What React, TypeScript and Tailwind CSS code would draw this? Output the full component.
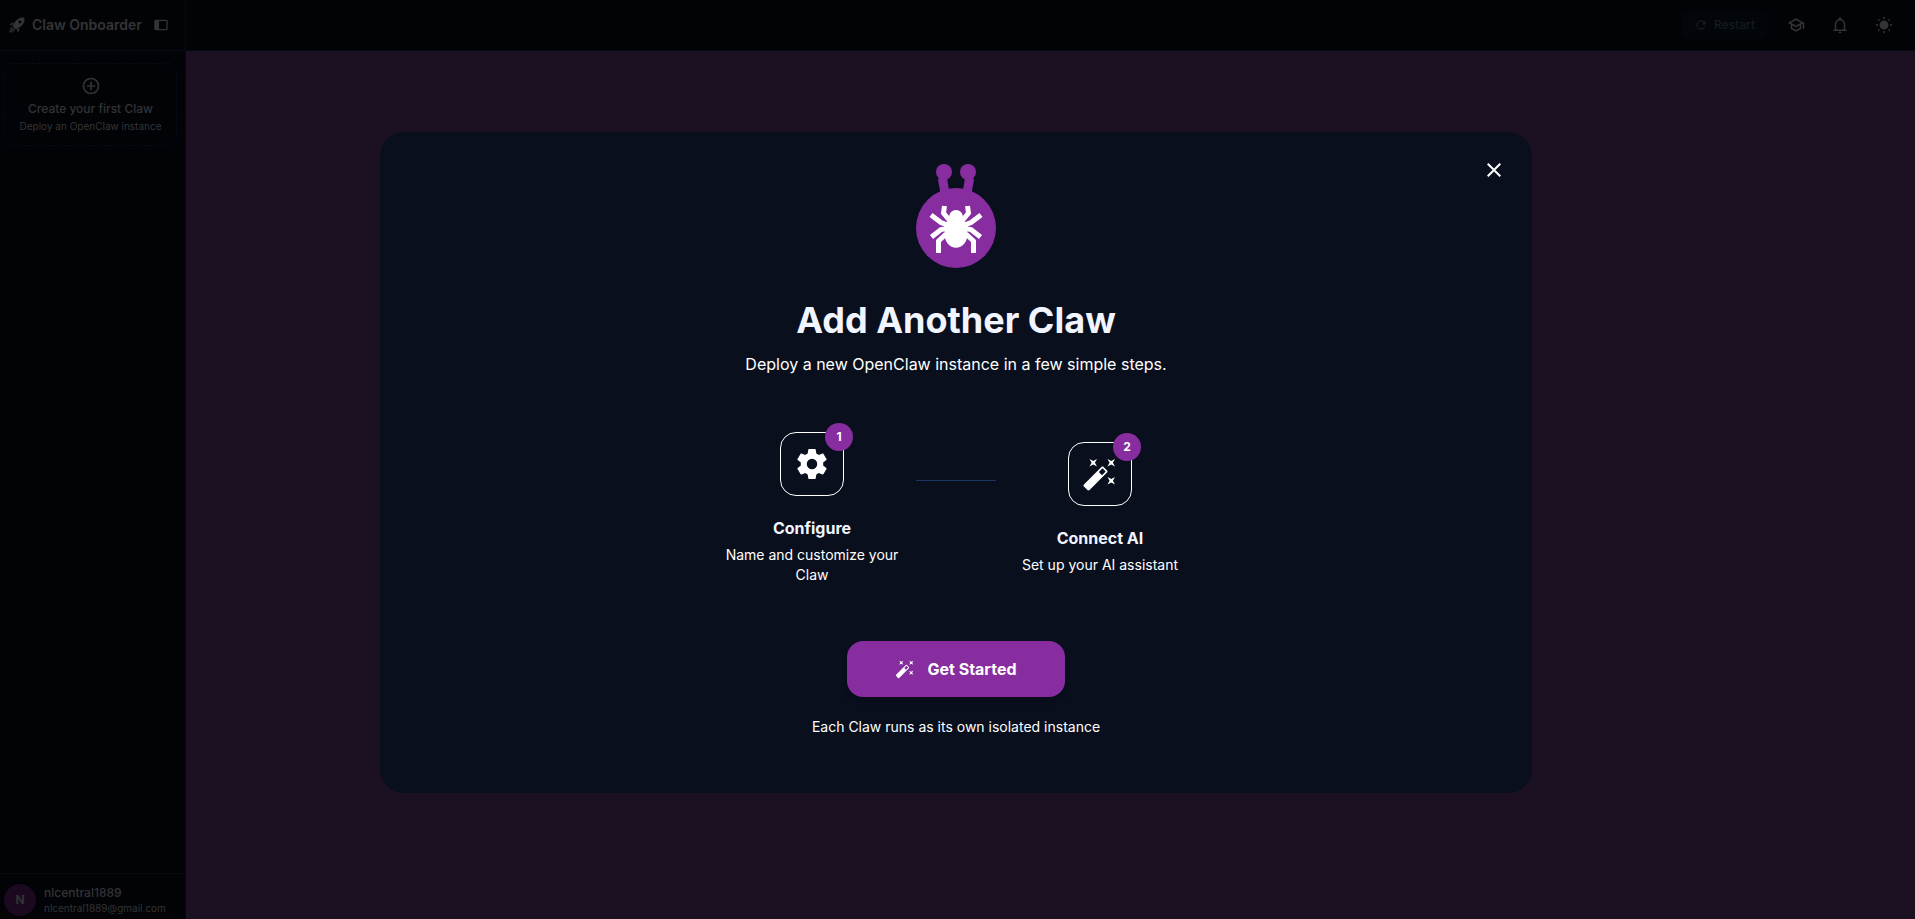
import type { ReactNode } from "react";

const icons = {
  rocket:
    "M13.13 22.19L11.5 18.36C13.07 17.78 14.54 17 15.9 16.09L13.13 22.19M5.64 12.5L1.81 10.87L7.91 8.1C7 9.46 6.22 10.93 5.64 12.5M21.61 2.39C21.61 2.39 16.66 .269 11 5.93C8.81 8.12 7.5 10.53 6.65 12.64C6.37 13.39 6.56 14.21 7.11 14.77L9.24 16.89C9.79 17.45 10.61 17.63 11.36 17.35C13.5 16.53 15.88 15.19 18.07 13C23.73 7.34 21.61 2.39 21.61 2.39M14.54 9.46C13.76 8.68 13.76 7.41 14.54 6.63S16.59 5.85 17.37 6.63C18.14 7.41 18.15 8.68 17.37 9.46C16.59 10.24 15.32 10.24 14.54 9.46M8.88 16.53L7.47 15.12L8.88 16.53M6.24 22L9.88 18.36C9.54 18.27 9.21 18.12 8.91 17.91L4.83 22H6.24M2 22H3.41L8.18 17.24L6.76 15.83L2 20.59V22M2 19.17L6.09 15.09C5.88 14.79 5.73 14.47 5.64 14.12L2 17.76V19.17Z",
  dockLeft:
    "M20 4H4A2 2 0 0 0 2 6V18A2 2 0 0 0 4 20H20A2 2 0 0 0 22 18V6A2 2 0 0 0 20 4M20 18H9V6H20Z",
  plusCircle:
    "M12,20C7.59,20 4,16.41 4,12C4,7.59 7.59,4 12,4C16.41,4 20,7.59 20,12C20,16.41 16.41,20 12,20M12,2A10,10 0 0,0 2,12A10,10 0 0,0 12,22A10,10 0 0,0 22,12A10,10 0 0,0 12,2M13,7H11V11H7V13H11V17H13V13H17V11H13V7Z",
  refresh:
    "M17.65,6.35C16.2,4.9 14.21,4 12,4A8,8 0 0,0 4,12A8,8 0 0,0 12,20C15.73,20 18.84,17.45 19.73,14H17.65C16.83,16.33 14.61,18 12,18A6,6 0 0,1 6,12A6,6 0 0,1 12,6C13.66,6 15.14,6.69 16.22,7.78L13,11H20V4L17.65,6.35Z",
  school:
    "M12 3L1 9L5 11.18V17.18L12 21L19 17.18V11.18L21 10.09V17H23V9L12 3M18.82 9L12 12.72L5.18 9L12 5.28L18.82 9M17 16L12 18.72L7 16V12.27L12 15L17 12.27V16Z",
  bell: "M10 21H14C14 22.1 13.1 23 12 23S10 22.1 10 21M21 19V20H3V19L5 17V11C5 7.9 7 5.2 10 4.3V4C10 2.9 10.9 2 12 2S14 2.9 14 4V4.3C17 5.2 19 7.9 19 11V17L21 19M17 11C17 8.2 14.8 6 12 6S7 8.2 7 11V18H17V11Z",
  sun: "M3.55 19.09L4.96 20.5L6.76 18.71L5.34 17.29M12 6C8.69 6 6 8.69 6 12S8.69 18 12 18 18 15.31 18 12C18 8.68 15.31 6 12 6M20 13H23V11H20M17.24 18.71L19.04 20.5L20.45 19.09L18.66 17.29M20.45 5L19.04 3.6L17.24 5.39L18.66 6.81M13 1H11V4H13M6.76 5.39L4.96 3.6L3.55 5L5.34 6.81L6.76 5.39M1 13H4V11H1M13 20H11V23H13",
  close:
    "M19,6.41L17.59,5L12,10.59L6.41,5L5,6.41L10.59,12L5,17.59L6.41,19L12,13.41L17.59,19L19,17.59L13.41,12L19,6.41Z",
  cog: "M12,15.5A3.5,3.5 0 0,1 8.5,12A3.5,3.5 0 0,1 12,8.5A3.5,3.5 0 0,1 15.5,12A3.5,3.5 0 0,1 12,15.5M19.43,12.97C19.47,12.65 19.5,12.33 19.5,12C19.5,11.67 19.47,11.34 19.43,11L21.54,9.37C21.73,9.22 21.78,8.95 21.66,8.73L19.66,5.27C19.54,5.05 19.27,4.96 19.05,5.05L16.56,6.05C16.04,5.66 15.5,5.32 14.87,5.07L14.5,2.42C14.46,2.18 14.25,2 14,2H10C9.75,2 9.54,2.18 9.5,2.42L9.13,5.07C8.5,5.32 7.96,5.66 7.44,6.05L4.95,5.05C4.73,4.96 4.46,5.05 4.34,5.27L2.34,8.73C2.21,8.95 2.27,9.22 2.46,9.37L4.57,11C4.53,11.34 4.5,11.67 4.5,12C4.5,12.33 4.53,12.65 4.57,12.97L2.46,14.63C2.27,14.78 2.21,15.05 2.34,15.27L4.34,18.73C4.46,18.95 4.73,19.03 4.95,18.95L7.44,17.94C7.96,18.34 8.5,18.68 9.13,18.93L9.5,21.58C9.54,21.82 9.75,22 10,22H14C14.25,22 14.46,21.82 14.5,21.58L14.87,18.93C15.5,18.67 16.04,18.34 16.56,17.94L19.05,18.95C19.27,19.03 19.54,18.95 19.66,18.73L21.66,15.27C21.78,15.05 21.73,14.78 21.54,14.63L19.43,12.97Z",
  wand: "M7.5,5.6L5,7L6.4,4.5L5,2L7.5,3.4L10,2L8.6,4.5L10,7L7.5,5.6M19.5,15.4L22,14L20.6,16.5L22,19L19.5,17.6L17,19L18.4,16.5L17,14L19.5,15.4M22,2L20.6,4.5L22,7L19.5,5.6L17,7L18.4,4.5L17,2L19.5,3.4L22,2M13.34,12.78L15.78,10.34L13.66,8.22L11.22,10.66L13.34,12.78M14.37,7.29L16.71,9.63C17.1,10 17.1,10.65 16.71,11.04L5.04,22.71C4.65,23.1 4,23.1 3.63,22.71L1.29,20.37C0.9,20 0.9,19.35 1.29,18.96L12.96,7.29C13.35,6.9 14,6.9 14.37,7.29Z",
};

const Icon = ({ name, className }: { name: keyof typeof icons; className: string }) => (
  <svg viewBox="0 0 24 24" fill="currentColor" aria-hidden="true" className={className}>
    <path d={icons[name]} />
  </svg>
);

const ClawLogo = () => (
  <svg viewBox="0 0 80 104" aria-hidden="true" className="w-20 h-[104px]">
    <g fill="#872da0">
      <circle cx="28" cy="8" r="8" />
      <circle cx="52" cy="8" r="8" />
      <path d="M22 16Q22 14 24 14L31 14L34 32L25 32Z" />
      <path d="M58 16Q58 14 56 14L49 14L46 32L55 32Z" />
      <circle cx="40" cy="64" r="40" />
    </g>
    {/* spider */}
    <g fill="#fff">
      <circle cx="40" cy="53" r="7" />
      <ellipse cx="40" cy="70" rx="11.5" ry="13.8" />
      <path d="M34 54H46L52 62L47 72H33L28 62Z" />
    </g>
    <g fill="none" stroke="#fff" strokeWidth="5">
      <path d="M15 51L25 58.5L40 64L55 58.5L65 51" />
      <path d="M15.5 73L25 65.5L40 63L55 65.5L64.5 73" />
      <path d="M22.5 89V77L30 70" />
      <path d="M57.5 89V77L50 70" />
      <path d="M28.5 42L27.5 49L34 57" />
      <path d="M51.5 42L52.5 49L46 57" />
    </g>
  </svg>
);

const Sidebar = () => (
  <aside className="w-[186px] shrink-0 flex flex-col bg-[#020307] border-r border-[#050b13] text-[#343435]">
    <div className="h-[51px] shrink-0 flex items-center px-2 border-b border-[#050d15]">
      <Icon name="rocket" className="size-[18px]" />
      <span className="ml-1.5 text-sm font-semibold">Claw Onboarder</span>
      <button aria-label="Collapse sidebar" className="ml-auto mr-2">
        <Icon name="dockLeft" className="size-4" />
      </button>
    </div>
    <button className="mt-3 ml-1 mr-2 h-[83px] flex flex-col items-center pt-3 rounded-lg border border-dashed border-[#080c14]">
      <Icon name="plusCircle" className="size-5" />
      <span className="mt-1 text-xs leading-[18px] font-medium">Create your first Claw</span>
      <span className="text-[10px] leading-4">Deploy an OpenClaw instance</span>
    </button>
    <div className="mt-auto h-[46px] flex items-center gap-2 px-1 pt-1.5 border-t border-[#090b0f]">
      <div className="size-8 rounded-full bg-[#1b0920] grid place-items-center text-xs font-bold">
        N
      </div>
      <div>
        <p className="text-xs leading-4 font-medium">nlcentral1889</p>
        <p className="text-[10px] leading-3.5">nlcentral1889@gmail.com</p>
      </div>
    </div>
  </aside>
);

const TopBar = () => (
  <header className="h-[51px] shrink-0 flex items-center justify-end bg-[#020307] border-b border-[#050b13] text-[#343435] pr-[22px]">
    <button className="mr-5 h-7 px-3 flex items-center gap-1.5 rounded-lg bg-[#02060a] text-xs font-medium text-[#171a1e]">
      <Icon name="refresh" className="size-3.5" />
      Restart
    </button>
    <div className="flex gap-[26px]">
      <button aria-label="Tutorials">
        <Icon name="school" className="size-[18px]" />
      </button>
      <button aria-label="Notifications">
        <Icon name="bell" className="size-[18px]" />
      </button>
      <button aria-label="Toggle theme">
        <Icon name="sun" className="size-[18px]" />
      </button>
    </div>
  </header>
);

const Step = ({
  number,
  title,
  text,
  children,
}: {
  number: number;
  title: string;
  text: string;
  children: ReactNode;
}) => (
  <li className="w-44 flex flex-col items-center">
    <div className="relative size-16 rounded-2xl border border-white grid place-items-center">
      {children}
      <span className="absolute -top-2.5 -right-2.5 size-7 rounded-full bg-[#872da0] grid place-items-center text-xs font-bold">
        {number}
      </span>
    </div>
    <h3 className="mt-5 text-base font-bold text-[#f1f5ff]">{title}</h3>
    <p className="mt-[5px] text-sm">{text}</p>
  </li>
);

const OnboardingDialog = () => (
  <div
    role="dialog"
    aria-labelledby="dialog-title"
    className="relative w-full max-w-6xl rounded-3xl bg-[#0a0f1e] text-white flex flex-col items-center pt-8 pb-14"
  >
    <button aria-label="Close" className="absolute top-[26px] right-[26px]">
      <Icon name="close" className="size-6" />
    </button>
    <ClawLogo />
    <h2 id="dialog-title" className="mt-8 text-4xl font-bold text-[#f1f5ff]">
      Add Another Claw
    </h2>
    <p className="mt-3 text-base">Deploy a new OpenClaw instance in a few simple steps.</p>

    <ol className="mt-14 flex items-center gap-4 text-center">
      <Step number={1} title="Configure" text="Name and customize your Claw">
        <Icon name="cog" className="size-9" />
      </Step>
      <li aria-hidden="true" className="w-20 h-px mb-14 bg-[#1a3560]" />
      <Step number={2} title="Connect AI" text="Set up your AI assistant">
        <Icon name="wand" className="size-9" />
      </Step>
    </ol>

    <button className="mt-14 h-14 px-12 flex items-center gap-3 rounded-2xl bg-[#872da0] text-base font-bold shadow-md">
      <Icon name="wand" className="size-5" />
      Get Started
    </button>
    <p className="mt-5 text-sm">Each Claw runs as its own isolated instance</p>
  </div>
);

const App = () => {
  return (
    <div className="relative min-h-screen flex bg-[#1b1122] font-['Inter',sans-serif]">
      <Sidebar />
      <div className="flex-1 flex flex-col">
        <TopBar />
        <main className="flex-1" />
      </div>
      <div className="absolute inset-0 flex items-center justify-center pt-1.5 pr-[3px]">
        <OnboardingDialog />
      </div>
    </div>
  );
};

export default App;
